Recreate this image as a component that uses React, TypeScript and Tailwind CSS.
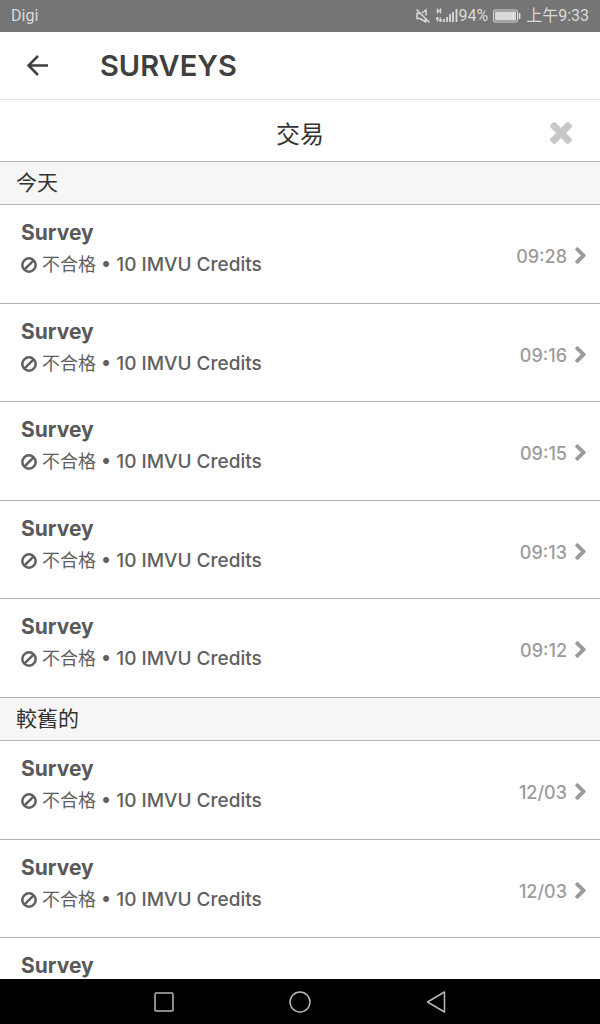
interface SurveyEntry {
  id: number;
  time: string;
}

const TODAY: SurveyEntry[] = [
  { id: 1, time: "09:28" },
  { id: 2, time: "09:16" },
  { id: 3, time: "09:15" },
  { id: 4, time: "09:13" },
  { id: 5, time: "09:12" },
];

const OLDER: SurveyEntry[] = [
  { id: 6, time: "12/03" },
  { id: 7, time: "12/03" },
  { id: 8, time: "12/03" },
];

function StatusBar() {
  return (
    <div className="flex h-8 shrink-0 items-center justify-between bg-[#757575] px-[11px] font-[Roboto,'Noto_Sans_CJK_TC',sans-serif] text-base leading-8 text-[#dadada]">
      <span>Digi</span>
      <div className="flex items-center">
        <svg className="mr-1 h-4 w-4" viewBox="0 0 16 16" fill="none" stroke="currentColor" strokeWidth="1.5" aria-hidden>
          <path d="M4.5 5.5H2v5h3l5.500 3.500V11M7 5l4-3v5.500M1.500 1.500l13 13" />
        </svg>
        <svg className="h-4 w-[23px]" viewBox="0 0 23 16" fill="none" stroke="currentColor" aria-hidden>
          <path d="M2.500 0.500v5M5.500 0.500v5M2.500 3h3" strokeWidth="1.400" />
          <path d="M2.500 13.500v-4M1 11l1.500-1.500L4 11M5.500 9.500v4M4 12l1.500 1.500L7 12" strokeWidth="1.200" />
          <path d="M9 14v-3M12 14V9M15 14V6M18 14V4M21.500 14V1" strokeWidth="1.800" />
        </svg>
        <span>94%</span>
        <svg className="mx-[5px] h-[14px] w-7" viewBox="0 0 28 14" fill="none" stroke="currentColor" aria-hidden>
          <rect x="0.5" y="1" width="24" height="12" rx="2" />
          <rect x="2" y="2.500" width="21" height="9" fill="currentColor" stroke="none" />
          <path d="M26.500 4v6" strokeWidth="1.800" />
        </svg>
        <span>上午9:33</span>
      </div>
    </div>
  );
}

function BanIcon() {
  return (
    <svg className="h-4 w-4 shrink-0" viewBox="0 0 16 16" fill="none" stroke="currentColor" strokeWidth="2.500" aria-hidden>
      <circle cx="8" cy="8" r="6.700" />
      <path d="M3.300 12.700l9.400-9.400" />
    </svg>
  );
}

function SurveyRow({ time }: { time: string }) {
  return (
    <li className="flex min-h-[98px] border-b border-[#b0b0b0] bg-white odd:min-h-[99px]">
      <button type="button" className="flex w-full items-start justify-between pt-3 pr-[14px] pl-[21px] text-left">
        <span>
          <span className="block text-[21px] leading-8 font-bold text-[#595959]">Survey</span>
          <span className="flex items-center gap-[5px] text-[19px] leading-8 font-medium text-[#606060]">
            <BanIcon />
            <span>
              <span className="text-lg leading-8 font-normal">不合格</span> • 10 IMVU Credits
            </span>
          </span>
        </span>
        <span className="flex items-center gap-2 pt-6 text-lg leading-8 font-medium text-[#9b9b9b]">
          {time}
          <svg className="mb-1 h-[17px] w-[11px]" viewBox="346 26 1036 1612" fill="currentColor" aria-hidden>
            <path d="M1363 877l-742 742q-19 19-45 19t-45-19l-166-166q-19-19-19-45t19-45l531-531-531-531q-19-19-19-45t19-45l166-166q19-19 45-19t45 19l742 742q19 19 19 45t-19 45z" />
          </svg>
        </span>
      </button>
    </li>
  );
}

function SurveySection({ title, entries }: { title: string; entries: SurveyEntry[] }) {
  return (
    <section>
      <h3 className="h-[43px] border-b border-[#b8b8b8] bg-[#f6f6f6] px-4 text-[21px] leading-[42px] text-[#333]">
        {title}
      </h3>
      <ul>
        {entries.map((entry) => (
          <SurveyRow key={entry.id} time={entry.time} />
        ))}
      </ul>
    </section>
  );
}

function NavBar() {
  return (
    <nav className="flex h-[45px] shrink-0 items-center justify-center gap-28 bg-black text-[#b8b8b8]">
      <button type="button" aria-label="Recent apps">
        <svg className="h-6 w-6" viewBox="0 0 24 24" fill="none" stroke="currentColor" strokeWidth="1.500">
          <rect x="3" y="3" width="18" height="18" rx="1" />
        </svg>
      </button>
      <button type="button" aria-label="Home">
        <svg className="h-6 w-6" viewBox="0 0 24 24" fill="none" stroke="currentColor" strokeWidth="1.500">
          <circle cx="12" cy="12" r="10" />
        </svg>
      </button>
      <button type="button" aria-label="Back">
        <svg className="h-6 w-6" viewBox="0 0 24 24" fill="none" stroke="currentColor" strokeWidth="1.500" strokeLinejoin="round">
          <path d="M20.500 2v20L3.500 12z" />
        </svg>
      </button>
    </nav>
  );
}

export default function App() {
  return (
    <div className="flex h-screen flex-col overflow-hidden bg-white font-[Inter,'Noto_Sans_CJK_TC',sans-serif]">
      <StatusBar />
      <header className="flex h-[68px] shrink-0 items-center border-b border-[#e6e6e6] pl-[26px]">
        <button type="button" className="text-[#404040]" aria-label="Back">
          <svg className="h-6 w-6" viewBox="0 0 24 24" fill="none" stroke="currentColor" strokeWidth="2.500">
            <path d="M22 11.500H3M12 2L2.500 11.500 12 21" />
          </svg>
        </button>
        <h1 className="pl-[50px] text-[29px] font-semibold text-[#404040]">SURVEYS</h1>
      </header>
      <main className="flex min-h-0 flex-1 flex-col">
        <div className="relative flex h-[62px] shrink-0 items-center justify-center border-b border-[#b8b8b8] pt-2">
          <h2 className="text-2xl text-[#333]">交易</h2>
          <button type="button" className="absolute top-[22px] right-7 text-[#c8c8c8]" aria-label="Close">
            <svg className="h-[22px] w-[22px]" viewBox="302 366 1188 1188" fill="currentColor">
              <path d="M1490 1322q0 40-28 68l-136 136q-28 28-68 28t-68-28l-294-294-294 294q-28 28-68 28t-68-28l-136-136q-28-28-28-68t28-68l294-294-294-294q-28-28-28-68t28-68l136-136q28-28 68-28t68 28l294 294 294-294q28-28 68-28t68 28l136 136q28 28 28 68t-28 68l-294 294 294 294q28 28 28 68z" />
            </svg>
          </button>
        </div>
        <div className="min-h-0 flex-1 overflow-y-auto [scrollbar-width:none]">
          <SurveySection title="今天" entries={TODAY} />
          <SurveySection title="較舊的" entries={OLDER} />
        </div>
      </main>
      <NavBar />
    </div>
  );
}
